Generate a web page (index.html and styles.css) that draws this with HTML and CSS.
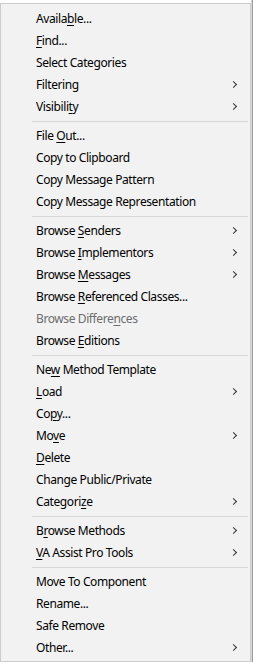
FILE: index.html
```html
<!DOCTYPE html>
<html lang="en">
<head>
    <meta charset="UTF-8">
    <meta name="viewport" content="width=device-width, initial-scale=1.0">
    <title>Methods menu</title>
    <link rel="stylesheet" href="styles.css">
</head>
<body>
    <div class="screen">
        <ul class="menu">
            <li class="item">Availa<u>b</u>le...</li>
            <li class="item"><u>F</u>ind...</li>
            <li class="item">Select Categories</li>
            <li class="item sub">Filtering</li>
            <li class="item sub">Visibili<u>t</u>y</li>
            <li class="sep"></li>
            <li class="item">File <u>O</u>ut...</li>
            <li class="item">Copy to Clipboard</li>
            <li class="item">Copy Message Pattern</li>
            <li class="item">Copy Message Representation</li>
            <li class="sep"></li>
            <li class="item sub">Browse <u>S</u>enders</li>
            <li class="item sub">Browse <u>I</u>mplementors</li>
            <li class="item sub">Browse <u>M</u>essages</li>
            <li class="item">Browse <u>R</u>eferenced Classes...</li>
            <li class="item disabled">Browse Differe<u>n</u>ces</li>
            <li class="item">Browse <u>E</u>ditions</li>
            <li class="sep"></li>
            <li class="item">Ne<u>w</u> Method Template</li>
            <li class="item sub"><u>L</u>oad</li>
            <li class="item">Co<u>p</u>y...</li>
            <li class="item sub">Mo<u>v</u>e</li>
            <li class="item"><u>D</u>elete</li>
            <li class="item">Change Public/Private</li>
            <li class="item sub">Categori<u>z</u>e</li>
            <li class="sep"></li>
            <li class="item sub">B<u>r</u>owse Methods</li>
            <li class="item sub"><u>V</u>A Assist Pro Tools</li>
            <li class="sep"></li>
            <li class="item">Move To Component</li>
            <li class="item">Rename...</li>
            <li class="item">Safe Remove</li>
            <li class="item sub">Other...</li>
        </ul>
        <div class="backdrop"></div>
    </div>
</body>
</html>
```

FILE: styles.css
```css
body {
    margin: 0;
    padding: 0;
    background-color: #ffffff;
    font-family: "Noto Sans", "Open Sans", sans-serif;
    font-size: 12px;
    letter-spacing: -0.4px;
    color: #000000;
}

.screen {
    display: flex;
    align-items: flex-start;
    padding-top: 3px;
}

.menu {
    list-style: none;
    margin: 0;
    padding: 4px 2px 2px 2px;
    width: 245px;
    background-color: #f2f2f2;
    border: 1px solid #cccccc;
    box-shadow: 0 2px 2px rgba(0, 0, 0, 0.45);
}

.backdrop {
    flex: 1;
    height: 662px;
    margin-top: -3px;
    background-color: #9c9c9c;
    border-left: 1px solid #d8d8d8;
}

.item {
    position: relative;
    height: 22px;
    line-height: 22px;
    padding-left: 33px;
    white-space: nowrap;
}

.item u {
    text-underline-offset: 2px;
}

.item.disabled {
    color: #6d6d6d;
}

/* chevron for submenus */
.item.sub::after {
    content: "";
    position: absolute;
    right: 12px;
    top: 8px;
    width: 4px;
    height: 4px;
    border-top: 1px solid #333333;
    border-right: 1px solid #333333;
    transform: rotate(45deg);
}

.sep {
    height: 7px;
    margin-left: 29px;
    margin-right: 0;
    background: linear-gradient(#f2f2f2 3px, #d7d7d7 3px, #d7d7d7 4px, #f2f2f2 4px);
}
```
